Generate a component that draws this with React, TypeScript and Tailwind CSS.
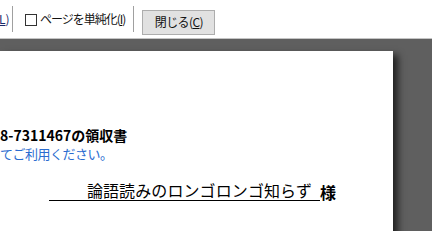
export default function App() {
  return (
    <div
      className="w-[432px] h-[231px] overflow-hidden flex flex-col bg-[#5f5f5f]"
      style={{ fontFamily: '"Noto Sans CJK JP", "Noto Sans", sans-serif' }}
    >
      {/* Toolbar */}
      <div className="h-[39px] shrink-0 bg-white border-b border-[#c4c4c4] flex items-center text-[12px] text-[#111]">
        <span className="w-[10px] text-[#1b2a6b] leading-none -ml-[1px]">
          <span className="underline">L</span>)
        </span>
        <div className="ml-[3px] w-px h-[26px] bg-[#a0a0a0]" />
        <div className="ml-[12px] w-[12px] h-[12px] border border-[#333] bg-white mt-[2px]" />
        <span className="ml-[3px] leading-none tracking-[-1px]">
          ページを単純化(<span className="underline">I</span>)
        </span>
        <div className="ml-[8px] w-px h-[26px] bg-[#a0a0a0]" />
        <button className="ml-[8px] w-[73px] h-[25px] mt-[6px] bg-[#e1e1e1] border border-[#adadad] text-[12px] leading-none tracking-[-0.6px] text-[#111]">
          閉じる(<span className="underline">C</span>)
        </button>
      </div>

      {/* Preview area */}
      <div className="flex-1 pt-[12px]">
        <div className="w-[393px] h-[300px] bg-white shadow-[5px_4px_7px_rgba(0,0,0,0.65)] pt-[77px]">
          <p className="text-[14px] font-bold leading-none text-black whitespace-nowrap">8-7311467の領収書</p>
          <p className="mt-[5px] text-[13px] leading-none text-[#2a6cd0] whitespace-nowrap tracking-[-0.5px]">
            てご利用ください。
          </p>
          <div className="mt-[22px] flex items-end">
            <div className="ml-[49px] w-[271px] border-b border-black flex justify-end pr-[8px] pb-[2px]">
              <span className="text-[16px] leading-none whitespace-nowrap tracking-[0.1px]">論語読みのロンゴロンゴ知らず</span>
            </div>
            <span className="text-[16px] font-bold leading-none pb-[1px]">様</span>
          </div>
        </div>
      </div>
    </div>
  );
}
